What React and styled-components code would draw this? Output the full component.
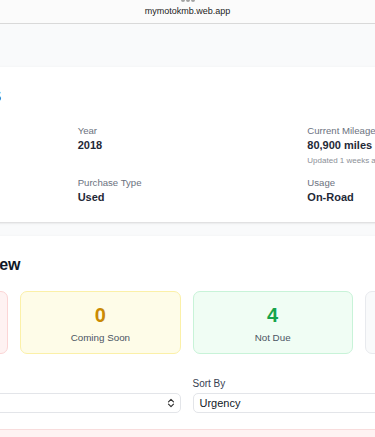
import React from 'react';
import styled, { createGlobalStyle } from 'styled-components';

const GlobalStyle = createGlobalStyle`
  html, body {
    margin: 0;
    padding: 0;
    background: #f9fafb;
    overflow: hidden;
    font-family: "Liberation Sans", Arial, sans-serif;
    color: #1f2937;
  }
  * { box-sizing: border-box; }
`;

const BrowserBar = styled.div`
  height: 24px;
  background: #fbfbfb;
  border-bottom: 1px solid #d9d9d9;
  display: flex;
  flex-direction: column;
  align-items: center;
  overflow: hidden;
`;

const Dots = styled.div`
  display: flex;
  gap: 1px;
  margin-top: -2px;
  height: 4px;
`;

const Dot = styled.span`
  width: 4px;
  height: 4px;
  border-radius: 50%;
  background: #a3a3a3;
`;

const Url = styled.div`
  margin-top: 4px;
  font-size: 9px;
  line-height: 11px;
  color: #1c1c1c;
`;

const Main = styled.main`
  width: 717px;
  margin-left: -172px;
  padding-top: 43px;
  display: flex;
  flex-direction: column;
  gap: 14px;
`;

const Card = styled.section`
  background: #fff;
  border-radius: 8px;
  box-shadow: 0 1px 3px rgba(0, 0, 0, 0.1), 0 1px 2px rgba(0, 0, 0, 0.05);
  padding: ${(p) => p.$pad || '16px 20px 17px'};
`;

const Title = styled.h2`
  margin: 0 0 17px;
  font-size: 21.9px;
  line-height: 24px;
  font-weight: 700;
  color: #111827;
`;

const Heading = styled.h3`
  margin: 0 0 16px;
  font-size: 16px;
  line-height: 20px;
  font-weight: 700;
  color: #111827;
`;

const DetailGrid = styled.div`
  display: grid;
  grid-template-columns: repeat(3, 1fr);
  column-gap: 12px;
  row-gap: 10px;
`;

const Detail = styled.div`
  display: flex;
  flex-direction: column;
`;

const Label = styled.div`
  font-size: 9.6px;
  line-height: 13px;
  color: #6b7280;
  margin-bottom: 1px;
`;

const Value = styled.div`
  font-size: 11px;
  line-height: 15px;
  font-weight: 700;
  color: #1f2937;
`;

const Note = styled.div`
  margin-top: 2px;
  font-size: 8px;
  line-height: 11px;
  color: #8b8f97;
  white-space: nowrap;
`;

const tones = {
  red: { bg: '#fef2f2', border: '#fbd5d5', text: '#dc2626' },
  yellow: { bg: '#fefce8', border: '#fbf0a8', text: '#ca8a04' },
  green: { bg: '#f0fdf4', border: '#c8f3d8', text: '#16a34a' },
  gray: { bg: '#f9fafb', border: '#e8eaee', text: '#4b5563' },
};

const StatGrid = styled.div`
  display: grid;
  grid-template-columns: repeat(4, 1fr);
  gap: 12px;
`;

const Stat = styled.div`
  background: ${(p) => tones[p.$tone].bg};
  border: 1px solid ${(p) => tones[p.$tone].border};
  border-radius: 7px;
  padding: 11px 12px 9px;
  text-align: center;
`;

const StatNumber = styled.div`
  font-size: 20px;
  line-height: 24px;
  font-weight: 700;
  color: ${(p) => tones[p.$tone].text};
`;

const StatLabel = styled.div`
  margin-top: 4px;
  font-size: 9.8px;
  line-height: 13px;
  color: #4b5563;
`;

const FilterRow = styled.div`
  display: grid;
  grid-template-columns: 1fr 1fr;
  gap: 12px;
  margin-top: 23px;
`;

const Field = styled.div`
  display: flex;
  flex-direction: column;
  gap: 1.5px;
`;

const FieldLabel = styled.div`
  font-size: 10px;
  line-height: 14px;
  font-weight: 500;
  color: #374151;
`;

const Select = styled.div`
  height: 20px;
  border: 1px solid #e3e5e9;
  border-radius: 5px;
  background: #fff;
  display: flex;
  align-items: center;
  justify-content: space-between;
  padding: 0 5px 0 6px;
  font-size: 11px;
  color: #111827;
`;

const Alert = styled.div`
  margin-top: 16px;
  height: 60px;
  background: #fef2f2;
  border: 1px solid #f8dcdc;
  border-radius: 7px;
`;

const UpDown = () => (
  <svg width="8" height="10" viewBox="0 0 8 10" fill="none" stroke="#333" strokeWidth="1.2" strokeLinecap="round" strokeLinejoin="round">
    <path d="M1.5 3.8 4 1.3l2.5 2.5" />
    <path d="M1.5 6.2 4 8.7l2.5-2.5" />
  </svg>
);

const details = [
  { label: 'Make', value: 'Yamaha' },
  { label: 'Year', value: '2018' },
  { label: 'Current Mileage', value: '80,900 miles', note: 'Updated 1 weeks ago' },
  { label: 'Model', value: 'MT-07' },
  { label: 'Purchase Type', value: 'Used' },
  { label: 'Usage', value: 'On-Road' },
];

const stats = [
  { tone: 'red', n: 2, label: 'Overdue' },
  { tone: 'yellow', n: 0, label: 'Coming Soon' },
  { tone: 'green', n: 4, label: 'Not Due' },
  { tone: 'gray', n: 6, label: 'Total' },
];

export default function App() {
  return (
    <>
      <GlobalStyle />
      <BrowserBar>
        <Dots>
          <Dot />
          <Dot />
          <Dot />
        </Dots>
        <Url>mymotokmb.web.app</Url>
      </BrowserBar>
      <Main>
        <Card>
          <Title>Vehicle Details</Title>
          <DetailGrid>
            {details.map((d) => (
              <Detail key={d.label}>
                <Label>{d.label}</Label>
                <Value>{d.value}</Value>
                {d.note && <Note>{d.note}</Note>}
              </Detail>
            ))}
          </DetailGrid>
        </Card>
        <Card $pad="19px 20px 20px">
          <Heading>Maintenance Overview</Heading>
          <StatGrid>
            {stats.map((s) => (
              <Stat key={s.label} $tone={s.tone}>
                <StatNumber $tone={s.tone}>{s.n}</StatNumber>
                <StatLabel>{s.label}</StatLabel>
              </Stat>
            ))}
          </StatGrid>
          <FilterRow>
            <Field>
              <FieldLabel>Filter By Status</FieldLabel>
              <Select>
                <span>All</span>
                <UpDown />
              </Select>
            </Field>
            <Field>
              <FieldLabel>Sort By</FieldLabel>
              <Select>
                <span>Urgency</span>
                <UpDown />
              </Select>
            </Field>
          </FilterRow>
          <Alert />
        </Card>
      </Main>
    </>
  );
}
